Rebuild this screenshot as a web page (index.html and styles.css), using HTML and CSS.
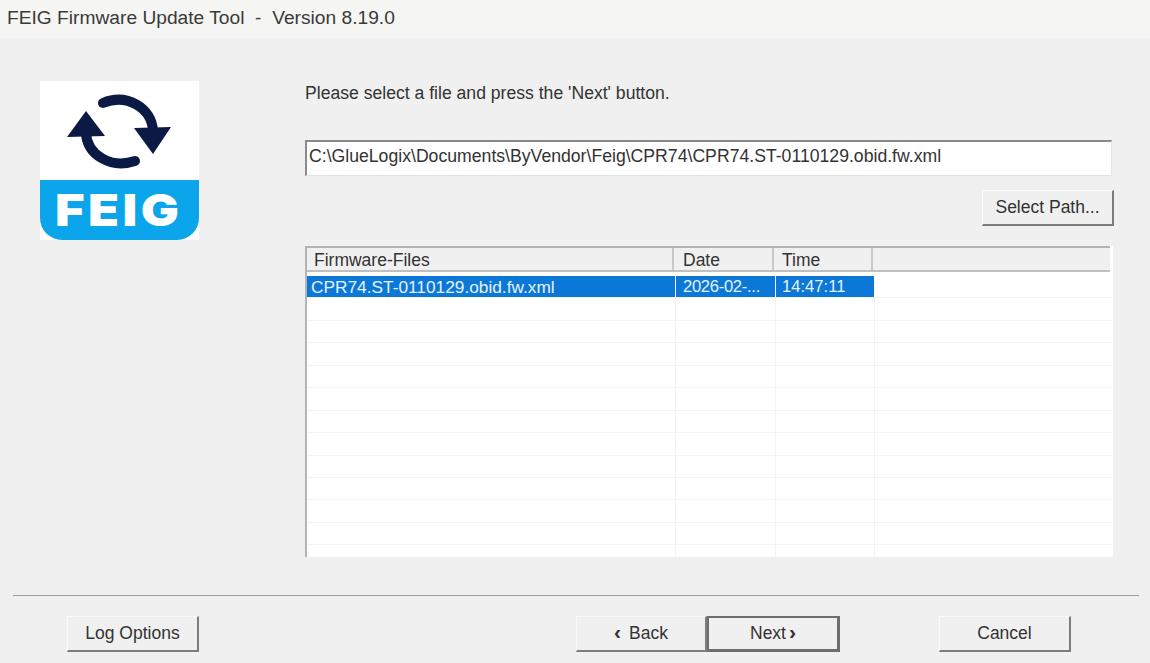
FILE: index.html
```html
<!DOCTYPE html>
<html lang="en">
<head>
<meta charset="utf-8">
<title>FEIG Firmware Update Tool</title>
<link rel="stylesheet" href="styles.css">
</head>
<body>
<div class="window">
  <header class="titlebar">FEIG Firmware Update Tool &nbsp;-&nbsp; Version 8.19.0</header>
  <main class="content">
    <div class="logo">
      <svg class="logo-art" viewBox="0 0 159 159" width="159" height="159" aria-hidden="true">
        <rect width="159" height="159" fill="#fff"/>
        <path d="M0 99H159V137A22 22 0 0 1 137 159H22A22 22 0 0 1 0 137Z" fill="#0ba5ec"/>
        <path d="M63 22C87 12 112 27 113 50" fill="none" stroke="#0b1a45" stroke-width="10" stroke-linecap="round"/>
        <path d="M94 47L131 46L113 73Z" fill="#0b1a45"/>
        <path d="M46 52C47 74 71 88 95 80" fill="none" stroke="#0b1a45" stroke-width="10" stroke-linecap="round"/>
        <path d="M46 30L27 56L65 55Z" fill="#0b1a45"/>
      </svg>
      <span class="logo-word">FEIG</span>
    </div>
    <section class="panel">
      <p class="prompt">Please select a file and press the 'Next' button.</p>
      <div class="path-field">C:\GlueLogix\Documents\ByVendor\Feig\CPR74\CPR74.ST-0110129.obid.fw.xml</div>
      <div class="path-actions"><button class="btn">Select Path...</button></div>
      <div class="list">
        <div class="list-head">
          <div class="head-cell col-file">Firmware-Files</div>
          <div class="head-cell col-date">Date</div>
          <div class="head-cell col-time">Time</div>
          <div class="head-cell col-rest"></div>
        </div>
        <div class="list-body">
          <div class="row selected"><div class="cell sel col-file">CPR74.ST-0110129.obid.fw.xml</div><div class="cell sel short tight col-date">2026-02-...</div><div class="cell sel short col-time">14:47:11</div><div class="cell col-rest"></div></div>
          <div class="row"><div class="cell col-file"></div><div class="cell col-date"></div><div class="cell col-time"></div><div class="cell col-rest"></div></div>
          <div class="row"><div class="cell col-file"></div><div class="cell col-date"></div><div class="cell col-time"></div><div class="cell col-rest"></div></div>
          <div class="row"><div class="cell col-file"></div><div class="cell col-date"></div><div class="cell col-time"></div><div class="cell col-rest"></div></div>
          <div class="row"><div class="cell col-file"></div><div class="cell col-date"></div><div class="cell col-time"></div><div class="cell col-rest"></div></div>
          <div class="row"><div class="cell col-file"></div><div class="cell col-date"></div><div class="cell col-time"></div><div class="cell col-rest"></div></div>
          <div class="row"><div class="cell col-file"></div><div class="cell col-date"></div><div class="cell col-time"></div><div class="cell col-rest"></div></div>
          <div class="row"><div class="cell col-file"></div><div class="cell col-date"></div><div class="cell col-time"></div><div class="cell col-rest"></div></div>
          <div class="row"><div class="cell col-file"></div><div class="cell col-date"></div><div class="cell col-time"></div><div class="cell col-rest"></div></div>
          <div class="row"><div class="cell col-file"></div><div class="cell col-date"></div><div class="cell col-time"></div><div class="cell col-rest"></div></div>
          <div class="row"><div class="cell col-file"></div><div class="cell col-date"></div><div class="cell col-time"></div><div class="cell col-rest"></div></div>
          <div class="row"><div class="cell col-file"></div><div class="cell col-date"></div><div class="cell col-time"></div><div class="cell col-rest"></div></div>
          <div class="row last"><div class="cell col-file"></div><div class="cell col-date"></div><div class="cell col-time"></div><div class="cell col-rest"></div></div>
        </div>
      </div>
    </section>
  </main>
  <footer class="footer">
    <div class="rule"></div>
    <div class="actions">
      <button class="btn">Log Options</button>
      <div class="wizard">
        <button class="btn btn-back"><span class="chev chev-left">&#8249;</span>Back</button>
        <button class="btn btn-next">Next<span class="chev chev-right">&#8250;</span></button>
      </div>
      <button class="btn btn-cancel">Cancel</button>
    </div>
  </footer>
</div>
</body>
</html>
```
FILE: styles.css
```css
* { box-sizing: border-box; }
html, body { margin: 0; padding: 0; }
body {
  width: 1150px;
  height: 663px;
  overflow: hidden;
  background: #f0f0f0;
  font-family: "Liberation Sans", Arial, sans-serif;
  color: #333;
  font-size: 17.5px;
}
.window { display: flex; flex-direction: column; height: 663px; }
.titlebar {
  height: 38px;
  flex: none;
  background: #f5f5f4;
  padding: 7px 0 0 7px;
  font-size: 19.2px;
  line-height: 22px;
  color: #3a3a3a;
}
.content { flex: none; height: 557px; display: flex; padding-left: 40px; }
.logo { position: relative; width: 159px; height: 159px; margin-top: 43px; flex: none; }
.logo-art { display: block; }
.logo-word {
  position: absolute;
  left: 15px;
  top: 104px;
  font-family: Inter, "Liberation Sans", sans-serif;
  font-weight: 900;
  font-size: 44px;
  line-height: 50px;
  letter-spacing: 3px;
  color: #fff;
  transform: scaleX(1.15);
  transform-origin: left center;
}
.panel { width: 809px; margin-left: 106px; flex: none; }
.prompt { margin: 0; padding-top: 45px; height: 102px; font-size: 17.6px; line-height: 21px; }
.path-field {
  width: 807px;
  height: 36px;
  background: #fff;
  border-top: 2px solid #8a8a8a;
  border-left: 2px solid #8a8a8a;
  border-right: 1px solid #e4e4e4;
  border-bottom: 1px solid #e4e4e4;
  padding: 3px 0 0 2px;
  font-size: 17.65px;
  line-height: 22px;
  white-space: nowrap;
}
.path-actions { display: flex; justify-content: flex-end; margin-top: 14px; height: 36px; }
.btn {
  display: block;
  width: 132px;
  height: 36px;
  padding: 0;
  background: #f0f0f0;
  border-top: 1px solid #fafafa;
  border-left: 1px solid #fafafa;
  border-right: 2px solid #7d7d7d;
  border-bottom: 2px solid #7d7d7d;
  font-family: inherit;
  font-size: 17.5px;
  color: #333;
}
.list { width: 808px; margin-top: 20px; height: 311px; background: #fff; border-left: 2px solid #b4b4b4; }
.list-head {
  display: flex;
  height: 26px;
  background: #f0f0f0;
  border-top: 2px solid #b4b4b4;
  width: 803px;
  border-bottom: 2px solid #c0c0c0;
  font-size: 17.5px;
  line-height: 25px;
}
.head-cell { padding-left: 7px; border-right: 2px solid #c8c8c8; height: 22px; }
.head-cell.col-file { width: 367px; }
.head-cell.col-date { width: 100px; padding-left: 9px; }
.head-cell.col-time { width: 99px; padding-left: 8px; }
.head-cell.col-rest { flex: 1; border-right: 0; }
.list-body { padding-top: 4px; }
.row { display: flex; height: 22.45px; border-bottom: 1px solid #f3f3f3; }
.row.last { border-bottom: 0; height: 12px; }
.cell { height: 100%; border-right: 1px solid #f3f3f3; font-size: 17.3px; line-height: 22px; white-space: nowrap; }
.cell.col-file { width: 369px; padding-left: 4px; }
.cell.col-date { width: 100px; padding-left: 7px; }
.cell.col-time { width: 99px; padding-left: 6px; }
.cell.col-rest { flex: 1; border-right: 0; }
.cell.sel { background: #0b78d7; color: #e6f2fb; height: 21px; border-right: 1px solid #fff; overflow: hidden; }
.cell.short { font-size: 16.6px; }
.cell.tight { letter-spacing: -0.3px; }
.footer { flex: 1; }
.rule { height: 1px; margin: 0 11px 0 13px; background: #9c9c9c; }
.actions { display: flex; padding: 20px 0 0 67px; }
.wizard { display: flex; margin-left: 377px; }
.btn-next {
  width: 133px;
  border: 2px solid #6e6e6e;
  border-bottom-width: 3px;
  border-right-width: 3px;
}
.btn-back { width: 131px; }
.btn-cancel { margin-left: 99px; }
.chev { font-weight: 700; font-size: 21px; line-height: 17px; }
.chev-left { margin-right: 8px; }
.chev-right { margin-left: 3px; }
```
